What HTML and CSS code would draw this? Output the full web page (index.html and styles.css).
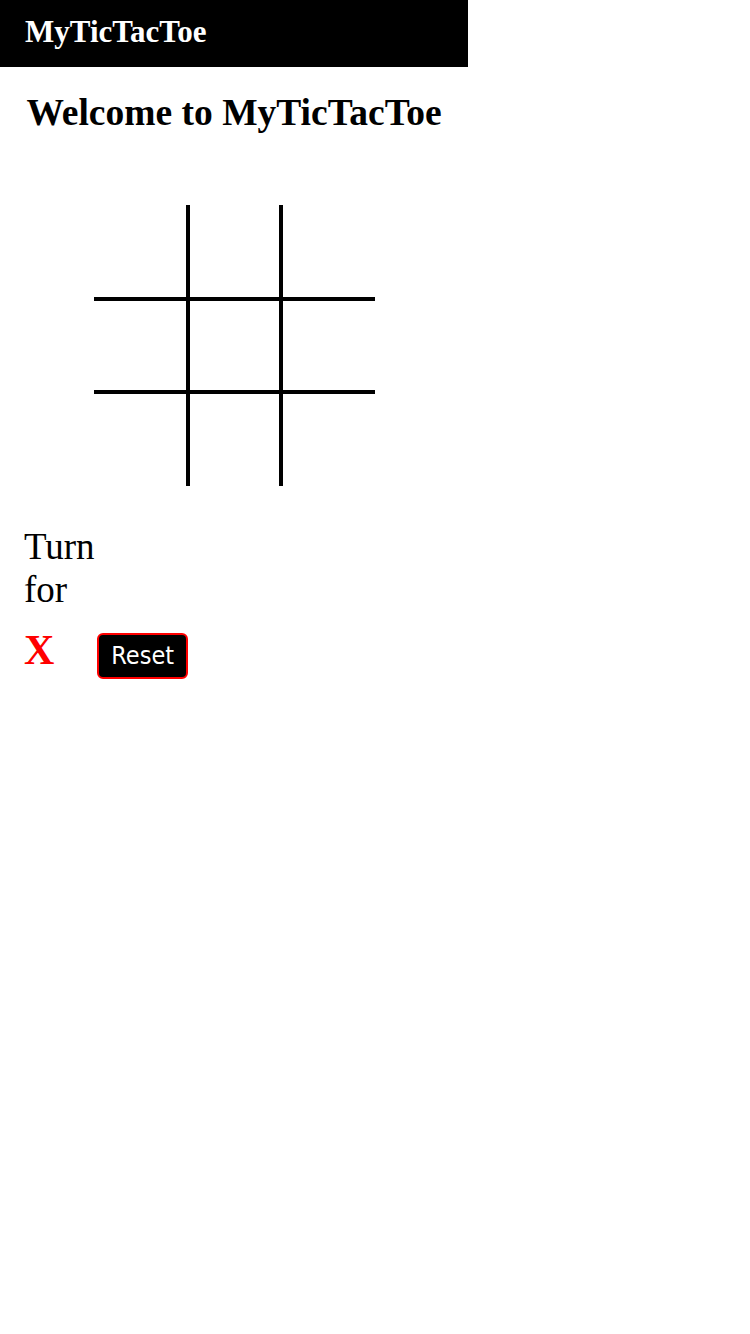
FILE: index.html
```html
<!DOCTYPE html>
<html lang="en">
<head>
<meta charset="utf-8">
<title>MyTicTacToe</title>
<link rel="stylesheet" href="styles.css">
</head>
<body>
<div class="app">
  <header class="topbar">
    <span class="brand">MyTicTacToe</span>
  </header>
  <main class="content">
    <h1 class="welcome">Welcome to MyTicTacToe</h1>
    <div class="board">
      <div class="cell"></div><div class="cell"></div><div class="cell"></div>
      <div class="cell"></div><div class="cell"></div><div class="cell"></div>
      <div class="cell"></div><div class="cell"></div><div class="cell"></div>
    </div>
    <section class="status">
      <p class="turn">Turn for</p>
      <div class="controls">
        <span class="player">X</span>
        <button class="reset" type="button">Reset</button>
      </div>
    </section>
  </main>
</div>
</body>
</html>
```

FILE: styles.css
```css
html, body {
  margin: 0;
  padding: 0;
  background: #ffffff;
}

body {
  font-family: "Liberation Serif", "Times New Roman", serif;
  color: #000000;
}

.app {
  width: 468px;
}

.topbar {
  box-sizing: border-box;
  height: 67px;
  background: #000000;
  padding: 14px 25px 0;
}

.brand {
  color: #ffffff;
  font-weight: bold;
  font-size: 31px;
  line-height: normal;
}

.content {
  display: flex;
  flex-direction: column;
}

.welcome {
  margin: 24px 0 0;
  font-size: 37.5px;
  font-weight: bold;
  text-align: center;
  line-height: normal;
}

.board {
  margin: 71px auto 0;
  display: grid;
  grid-template-columns: 92px 89px 92px;
  grid-template-rows: 92px 89px 92px;
  gap: 4px;
  background: #000000;
  width: 281px;
}

.cell {
  background: #ffffff;
}

.status {
  padding: 0 24px;
  margin-top: 39px;
}

.turn {
  margin: 0;
  width: 80px;
  font-size: 37px;
  line-height: 43px;
}

.controls {
  display: flex;
  align-items: baseline;
  gap: 43px;
  margin-top: 15px;
}

.player {
  color: #ff0000;
  font-weight: bold;
  font-size: 42px;
  line-height: normal;
}

.reset {
  font-family: "DejaVu Sans Condensed", "DejaVu Sans", sans-serif;
  font-stretch: condensed;
  font-size: 25px;
  line-height: 30px;
  color: #ffffff;
  background: #000000;
  border: 2px solid #ff0000;
  border-radius: 6px;
  padding: 6px 12px;
  margin: 0;
}
```
